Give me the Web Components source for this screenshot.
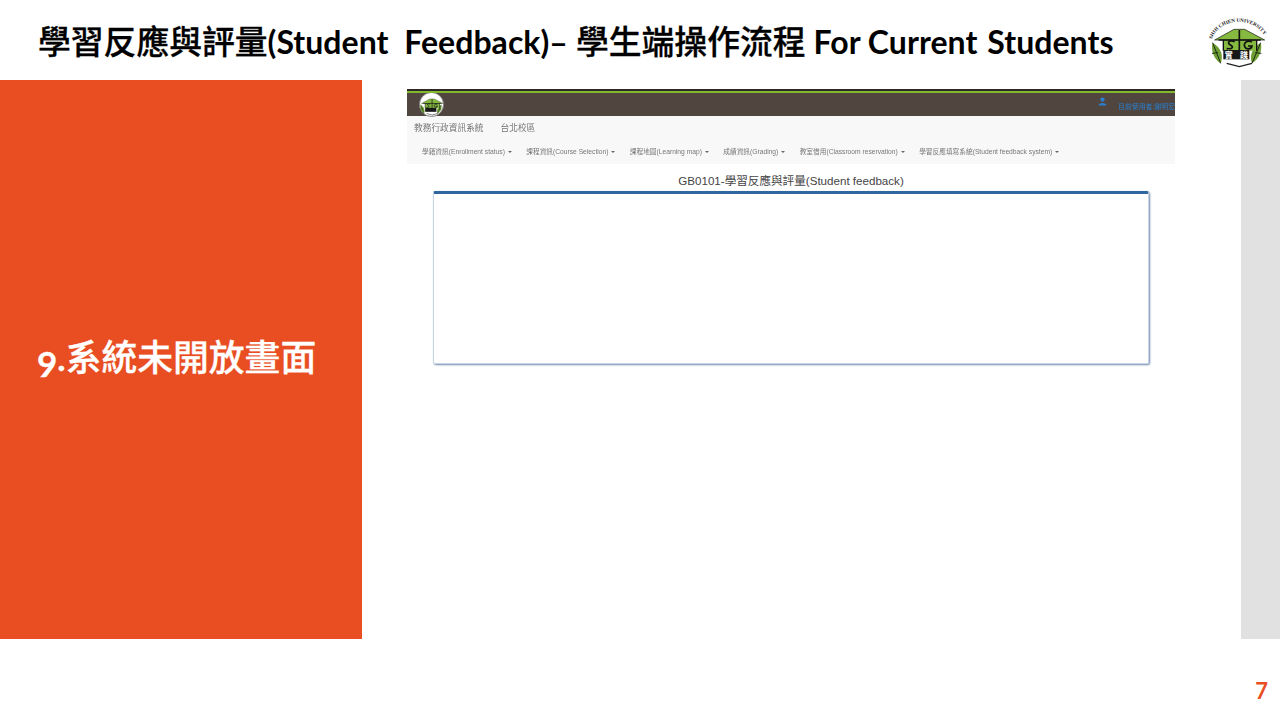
<!DOCTYPE html>
<html lang="zh-Hant">
<head>
<meta charset="utf-8">
<title>Student Feedback</title>
<style>
  html, body { margin: 0; padding: 0; background: #fff; }
  body { width: 1280px; height: 720px; overflow: hidden; }
</style>
</head>
<body>
<slide-page>
  <slide-header slot="header">
    <span>學習反應與評量</span><b>(Student&nbsp; Feedback)–</b><span class="gap">學生端操作流程</span><b class="gap">For Current&nbsp;&#8202;Students</b>
  </slide-header>
  <side-title slot="side"><b class="num">9</b><b>.</b>系統未開放畫面</side-title>
  <sys-shot slot="main"></sys-shot>
  <span slot="page">7</span>
</slide-page>

<script>
// 校徽,頁首與系統畫面共用(座標 270x240)
const crest = `
  <path d="M68 128 C62 150 70 176 92 190 C100 170 96 144 68 128 Z" fill="#6f9e35"/>
  <path d="M212 128 C218 150 208 176 186 190 C178 170 184 144 212 128 Z" fill="#6f9e35"/>
  <path d="M68 128 L92 190 M212 128 L186 190 M84 158 L66 160 M196 158 L214 160" stroke="#1c2a12" stroke-width="3" fill="none"/>
  <path d="M100 118 H200 V152 H100 Z" fill="#86b93f"/>
  <path d="M74 120 L132 88 H164 L224 120 Z" fill="#86b93f" stroke="#111" stroke-width="2" stroke-linejoin="round"/>
  <path d="M86 120 H212 M100 120 V152 M200 120 V152" stroke="#111" stroke-width="4" fill="none"/>
  <path d="M148 90 V150" stroke="#111" stroke-width="5" fill="none"/>
  <path d="M134 125 C118 119 110 128 120 134 C132 140 130 148 110 146 M186 125 C170 119 160 130 164 140 C168 150 184 148 186 138 H174" stroke="#111" stroke-width="5" fill="none"/>
  <rect x="100" y="150" width="78" height="28" fill="#171717"/>
  <path d="M110 190 L148 200 L186 190" fill="none" stroke="#222" stroke-width="4"/>`

class SlidePage extends HTMLElement {
    constructor() {
        super()
        this.attachShadow({ mode: 'open' })
        this.shadowRoot.innerHTML = `
        <style>
            :host { display: flex; flex-direction: column; width: 1280px; height: 720px; }
            .middle { display: flex; height: 559px; }
            .main { flex: 1; min-width: 0; }
            .rail { width: 39px; background: #e1e1e1; }
            .foot {
                flex: 1; display: flex; justify-content: flex-end; align-items: flex-start;
                padding: 39px 12px 0 0;
                color: #e94e22; font: bold 22px/26px "Lato", "Liberation Sans", sans-serif;
            }
        </style>
        <slot name="header"></slot>
        <div class="middle">
            <slot name="side"></slot>
            <div class="main"><slot name="main"></slot></div>
            <div class="rail"></div>
        </div>
        <div class="foot"><slot name="page"></slot></div>
        `
    }
}

class SlideHeader extends HTMLElement {
    constructor() {
        super()
        this.attachShadow({ mode: 'open' })
        this.shadowRoot.innerHTML = `
        <style>
            :host {
                display: flex; align-items: center; justify-content: space-between;
                height: 80px; padding-left: 38px;
                color: #000; white-space: nowrap;
            }
            .title { display: flex; align-items: baseline; margin-top: 1px; }
            ::slotted(span) { font: 500 32.8px/40px "Noto Sans CJK TC", sans-serif; -webkit-text-stroke: .3px #000; }
            ::slotted(b) { font: bold 32px/40px "Lato", "Liberation Sans", sans-serif; letter-spacing: .05px; }
            ::slotted(.gap) { margin-left: 8px; }
            svg { width: 90px; height: 80px; flex: none; }
            .arc { font: bold 15px "Liberation Serif", serif; fill: #222; }
            .seal { font: bold 24px "Noto Sans CJK TC", sans-serif; fill: #fff; }
        </style>
        <div class="title"><slot></slot></div>
        <svg viewBox="0 0 270 240">
            <defs><path id="arc" d="M66 118 A82 66 0 0 1 226 116"/></defs>
            <text class="arc"><textPath href="#arc" textLength="192" lengthAdjust="spacingAndGlyphs">SHIH CHIEN UNIVERSITY</textPath></text>
            ${crest}
            <text class="seal" x="139" y="173" text-anchor="middle" textLength="70">實踐</text>
        </svg>
        `
    }
}

class SideTitle extends HTMLElement {
    constructor() {
        super()
        this.attachShadow({ mode: 'open' })
        this.shadowRoot.innerHTML = `
        <style>
            :host {
                display: flex; align-items: center; box-sizing: border-box;
                width: 362px; padding: 0 0 8px 37px;
                background: #e94e22; color: #fff;
                font: 500 35.8px/46px "Noto Sans CJK TC", sans-serif;
                -webkit-text-stroke: .3px #fff;
                white-space: nowrap;
            }
            .t { display: block; }
            ::slotted(b) { font: bold 35px/46px "Lato", sans-serif; }
            /* 舊式數字:9 往下掉到基線以下 */
            ::slotted(.num) { display: inline-block; transform: translateY(6px); }
        </style>
        <div class="t"><slot></slot></div>
        `
    }
}

class SysShot extends HTMLElement {
    constructor() {
        super()
        this.attachShadow({ mode: 'open' })
        const menus = ['學籍資訊(Enrollment status)', '課程資訊(Course Selection)', '課程地圖(Learning map)', '成績資訊(Grading)', '教室借用(Classroom reservation)', '學習反應填寫系統(Student feedback system)']
        this.shadowRoot.innerHTML = `
        <style>
            :host {
                display: block; width: 768px; margin: 9px 0 0 45px;
                font-family: "Liberation Sans", "Noto Sans CJK TC", sans-serif;
            }
            .top {
                display: flex; align-items: center; justify-content: space-between;
                height: 27px; box-sizing: border-box;
                background: #50453f; border-top: 2px solid #2d2a26; position: relative;
                padding: 2px 0 0 12px;
            }
            .top::before { content: ""; position: absolute; left: 0; right: 0; top: 0; height: 2px; background: #84b82f; }
            .top svg.logo { width: 25px; height: 25px; }
            .user { display: flex; align-items: center; gap: 11px; color: #2a7fce; font-size: 6.9px; white-space: nowrap; width: 77px; overflow: hidden; }
            .user svg { width: 9px; height: 9px; margin-bottom: 6px; flex: none; }
            .user span { margin-top: 3px; filter: blur(.3px); }
            .nav { height: 48px; box-sizing: border-box; background: #f8f8f8; color: #777; padding-left: 7px; }
            .brand { display: flex; gap: 17px; height: 22px; align-items: center; font-size: 8.7px; filter: blur(.3px); }
            .menu { display: flex; gap: 14.4px; margin-top: 7px; padding-left: 8px; font-size: 6.7px; line-height: 14px; white-space: nowrap; filter: blur(.25px); }
            .menu i { display: inline-block; margin-left: 3px; vertical-align: 1px; border: 2px solid transparent; border-top-color: #666; border-bottom: 0; }
            h1 { margin: 9px 0 0 0; text-align: center; font: 400 11.6px/16px "Liberation Sans", "Noto Sans CJK TC", sans-serif; color: #444; }
            .panel {
                height: 173px; width: 716px; box-sizing: border-box; margin: 2px 0 0 26px;
                background: #fff; border: 1px solid #c6d6e8; border-top: 3px solid #2f669f;
                border-radius: 2px;
                box-shadow: 1px 1px 2px #7488b0;
            }
        </style>
        <div class="top">
            <svg class="logo" viewBox="57 40 174 174">
                <circle cx="144" cy="127" r="84" fill="#fff" stroke="#777" stroke-width="6"/>
                ${crest}
            </svg>
            <div class="user">
                <svg viewBox="0 0 16 16"><circle cx="8" cy="4.5" r="3.8" fill="#2a7fce"/><path d="M1 15 C1 9 15 9 15 15 Z" fill="#2a7fce"/></svg>
                <span>目前使用者:謝明宏</span>
            </div>
        </div>
        <div class="nav">
            <div class="brand"><span>教務行政資訊系統</span><span>台北校區</span></div>
            <div class="menu">${menus.map(m => `<span>${m}<i></i></span>`).join('')}</div>
        </div>
        <h1>GB0101-學習反應與評量(Student feedback)</h1>
        <div class="panel"></div>
        `
    }
}

customElements.define('slide-page', SlidePage)
customElements.define('slide-header', SlideHeader)
customElements.define('side-title', SideTitle)
customElements.define('sys-shot', SysShot)
</script>
</body>
</html>
